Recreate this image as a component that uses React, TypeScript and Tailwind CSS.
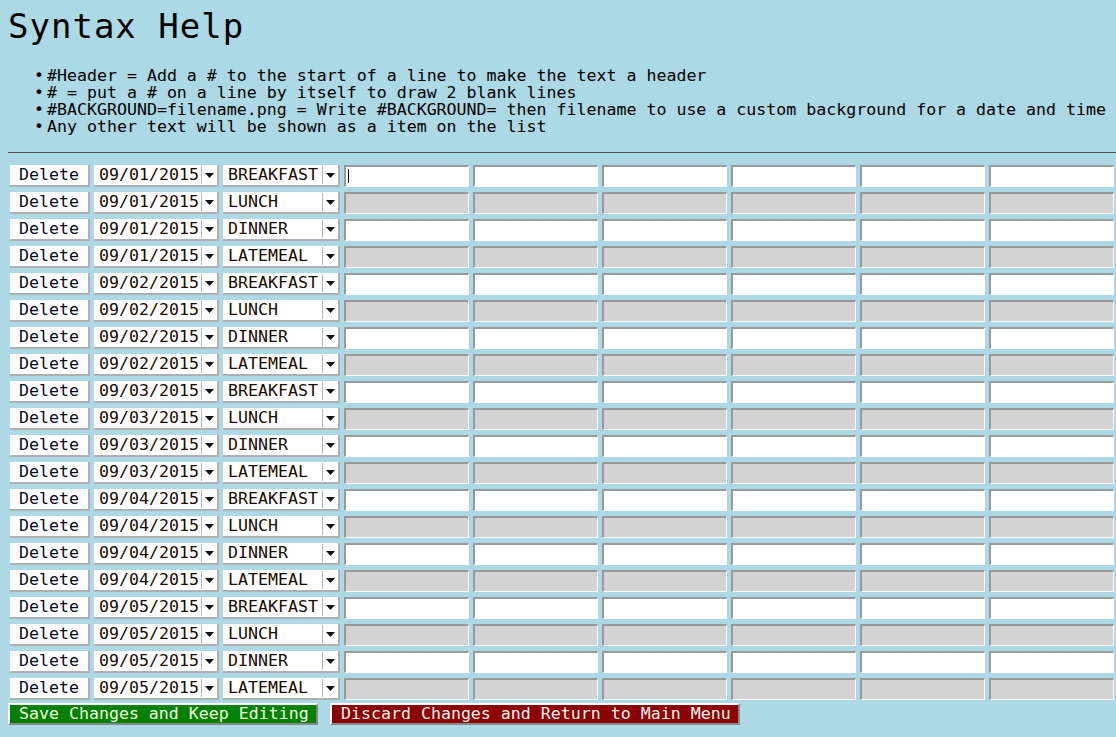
const rows = [
  ["09/01/2015", "BREAKFAST"],
  ["09/01/2015", "LUNCH"],
  ["09/01/2015", "DINNER"],
  ["09/01/2015", "LATEMEAL"],
  ["09/02/2015", "BREAKFAST"],
  ["09/02/2015", "LUNCH"],
  ["09/02/2015", "DINNER"],
  ["09/02/2015", "LATEMEAL"],
  ["09/03/2015", "BREAKFAST"],
  ["09/03/2015", "LUNCH"],
  ["09/03/2015", "DINNER"],
  ["09/03/2015", "LATEMEAL"],
  ["09/04/2015", "BREAKFAST"],
  ["09/04/2015", "LUNCH"],
  ["09/04/2015", "DINNER"],
  ["09/04/2015", "LATEMEAL"],
  ["09/05/2015", "BREAKFAST"],
  ["09/05/2015", "LUNCH"],
  ["09/05/2015", "DINNER"],
  ["09/05/2015", "LATEMEAL"],
];

const help = [
  "#Header = Add a # to the start of a line to make the text a header",
  "# = put a # on a line by itself to draw 2 blank lines",
  "#BACKGROUND=filename.png = Write #BACKGROUND= then filename to use a custom background for a date and time",
  "Any other text will be shown as a item on the list",
];

function Select({ value, w }: { value: string; w: string }) {
  return (
    <div className={`${w} h-[22px] flex items-center bg-white border-r-2 border-b-2 border-[#b0b0b0] text-[#1a0a00]`}>
      <span className="flex-1 pl-[5px] whitespace-nowrap overflow-hidden">{value}</span>
      <span className="w-[16px] h-[18px] border-l border-[#b8b8b8] flex items-center justify-center">
        <svg width="9" height="5" viewBox="0 0 9 5">
          <path d="M0 0h9L4.5 5z" fill="#111" />
        </svg>
      </span>
    </div>
  );
}

export default function App() {
  return (
    <div
      className="min-h-[737px] bg-[#add8e6] text-black pb-4 overflow-hidden"
      style={{ fontFamily: '"DejaVu Sans Mono", "Liberation Mono", monospace' }}
    >
      <h1 className="pl-[8px] pt-[6px] text-[34px] leading-[40px] tracking-[1px]">Syntax Help</h1>
      <ul className="mt-[21px] pl-[34px] text-[16.6px] leading-[17px] list-none">
        {help.map((t, i) => (
          <li key={i} className="flex whitespace-nowrap">
            <span className="w-[13px] shrink-0">•</span>
            <span>{t}</span>
          </li>
        ))}
      </ul>
      <div className="mt-[17px] ml-[8px] h-px bg-[#555]" />
      <div className="mt-[12px] pl-[10px] flex flex-col gap-[5px] text-[16.6px]">
        {rows.map(([d, m], i) => (
          <div key={i} className="flex gap-[4px] items-start">
            <div className="w-[80px] h-[22px] bg-white border-r-2 border-b-2 border-[#b0b0b0] flex items-center justify-center text-[#0a0a1a]">
              Delete
            </div>
            <Select value={d} w="w-[125px]" />
            <Select value={m} w="w-[117px]" />
            <div className="flex gap-[4px]">
              {[0, 1, 2, 3, 4, 5].map((k) => (
                <div
                  key={k}
                  className={`w-[125px] h-[22px] border-t-2 border-l-2 border-[#999] border-r border-b border-r-white border-b-white ${
                    i % 2 === 1 ? "bg-[#d3d3d3]" : "bg-white"
                  }`}
                >
                  {i === 0 && k === 0 && <div className="ml-[2px] mt-[2px] w-px h-[14px] bg-black" />}
                </div>
              ))}
            </div>
          </div>
        ))}
      </div>
      <div className="mt-[3px] pl-[8px] flex gap-[12px] text-[16.6px]">
        <button className="h-[22px] w-[310px] bg-[#008000] text-[#f0ffe0] border-t-2 border-l-2 border-white border-r-2 border-b-2 border-r-[#888] border-b-[#888] text-left pl-[9px] leading-[18px]">
          Save Changes and Keep Editing
        </button>
        <button className="h-[22px] w-[410px] bg-[#8b0000] text-[#fff0f0] border-t-2 border-l-2 border-white border-r-2 border-b-2 border-r-[#888] border-b-[#888] text-left pl-[9px] leading-[18px]">
          Discard Changes and Return to Main Menu
        </button>
      </div>
    </div>
  );
}
